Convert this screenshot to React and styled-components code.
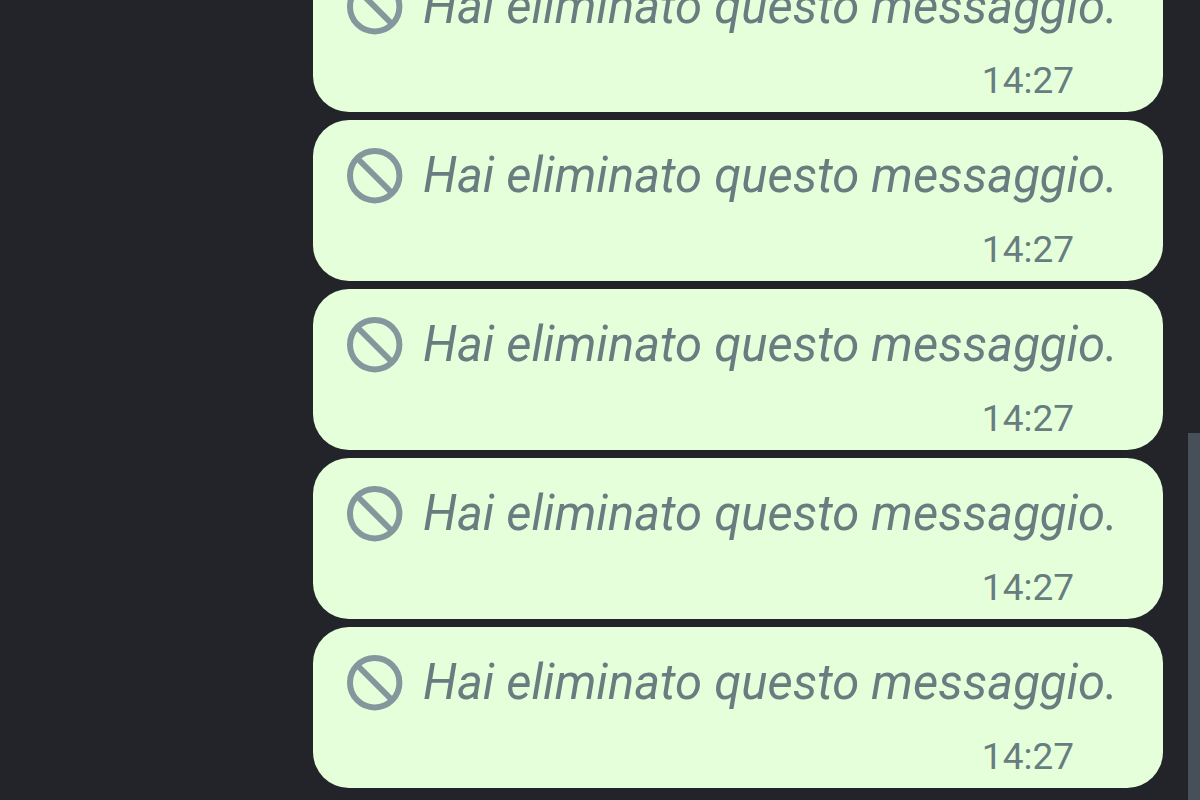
import React from "react";
import styled, { createGlobalStyle } from "styled-components";

const GlobalStyle = createGlobalStyle`
  * { box-sizing: border-box; }
  html, body, #root { height: 100%; }
  body { margin: 0; background: #222429; font-family: Roboto, sans-serif; }
`;

const Chat = styled.main`
  position: relative;
  display: flex;
  flex-direction: column;
  justify-content: flex-end;
  height: 100%;
  overflow: hidden;
  padding: 0 37px 12px;
`;

const MessageList = styled.ol`
  display: flex;
  flex-direction: column;
  align-items: flex-end;
  gap: 8px;
  margin: 0;
  padding: 0;
  list-style: none;
`;

const Bubble = styled.li`
  display: flex;
  flex-direction: column;
  gap: 23px;
  width: 850px;
  max-width: 100%;
  padding: 25px 32px 11px;
  border-radius: 36px;
  background: #e5ffdb;
  color: #687d80;
`;

const Notice = styled.p`
  display: flex;
  align-items: center;
  gap: 18px;
  margin: 0;
  font-size: 49px;
  font-style: italic;
  line-height: 62px;
  white-space: nowrap;
`;

const BanIcon = styled.svg`
  flex: none;
  width: 60px;
  height: 60px;
  fill: none;
  stroke: #84979c;
  stroke-width: 6;
`;

const Time = styled.time`
  align-self: flex-end;
  margin-right: 57px;
  font-size: 37px;
  line-height: 40px;
`;

const ScrollThumb = styled.div`
  position: absolute;
  top: 433px;
  right: 0;
  bottom: 0;
  width: 12px;
  background: #474f58;
`;

const messages = ["14:27", "14:27", "14:27", "14:27", "14:27"];

function DeletedMessage({ time }) {
  return (
    <Bubble>
      <Notice>
        <BanIcon viewBox="0 0 60 60" aria-hidden="true">
          <circle cx="29.7" cy="29.7" r="24.7" />
          <path d="M12.5 12.5 L47 47" />
        </BanIcon>
        <span>Hai eliminato questo messaggio.</span>
      </Notice>
      <Time>{time}</Time>
    </Bubble>
  );
}

export default function App() {
  return (
    <>
      <GlobalStyle />
      <Chat>
        <MessageList>
          {messages.map((time, index) => (
            <DeletedMessage key={index} time={time} />
          ))}
        </MessageList>
        <ScrollThumb />
      </Chat>
    </>
  );
}
